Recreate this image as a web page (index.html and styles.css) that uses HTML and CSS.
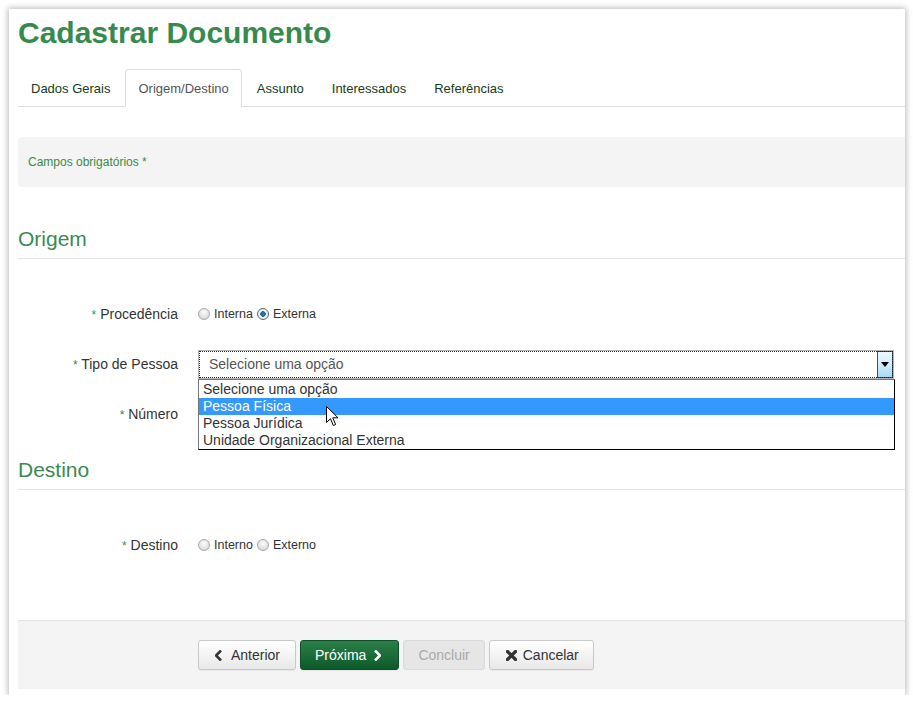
FILE: index.html
```html
<!DOCTYPE html>
<html lang="pt">
<head>
<meta charset="utf-8">
<title>Cadastrar Documento</title>
<link rel="stylesheet" href="styles.css">
</head>
<body>
<div class="panel">
  <h1 class="title">Cadastrar Documento</h1>
  <ul class="tabs">
    <li class="tab">Dados Gerais</li>
    <li class="tab active">Origem/Destino</li>
    <li class="tab">Assunto</li>
    <li class="tab">Interessados</li>
    <li class="tab">Referências</li>
  </ul>

  <div class="notice">Campos obrigatórios *</div>

  <h2 class="section">Origem</h2>

  <div class="row first">
    <div class="label"><span class="req">*</span> Procedência</div>
    <div class="control radios">
      <span class="radio"></span><span class="rtext">Interna</span>
      <span class="radio checked"></span><span class="rtext">Externa</span>
    </div>
  </div>

  <div class="row">
    <div class="label"><span class="req">*</span> Tipo de Pessoa</div>
    <div class="control selectwrap">
      <div class="select">
        <span class="select-text">Selecione uma opção</span>
        <span class="select-btn"><svg width="8" height="5" viewBox="0 0 8 5"><path d="M0 0H8L4 5Z" fill="#000"/></svg></span>
      </div>
      <ul class="dropdown">
        <li class="opt">Selecione uma opção</li>
        <li class="opt hl">Pessoa Física</li>
        <li class="opt">Pessoa Jurídica</li>
        <li class="opt">Unidade Organizacional Externa</li>
      </ul>
      <svg class="cursor" width="13" height="21" viewBox="0 0 13 21"><path d="M0.5 0.5V16.5L4.5 12.7L7.3 19.5L9.6 18.5L6.8 11.8H12Z" fill="#fff" stroke="#000" stroke-width="1" stroke-linejoin="round"/></svg>
    </div>
  </div>

  <div class="row">
    <div class="label"><span class="req">*</span> Número</div>
    <div class="control"></div>
  </div>

  <h2 class="section second">Destino</h2>

  <div class="row first">
    <div class="label"><span class="req">*</span> Destino</div>
    <div class="control radios">
      <span class="radio"></span><span class="rtext">Interno</span>
      <span class="radio"></span><span class="rtext">Externo</span>
    </div>
  </div>

  <div class="footer">
    <button class="btn"><svg class="ico" width="8" height="11" viewBox="0 0 8 11"><path d="M6 0.5L1 5.5L6 10.5" fill="none" stroke="#333" stroke-width="2.6"/></svg>Anterior</button>
    <button class="btn primary">Próxima<svg class="ico right" width="8" height="11" viewBox="0 0 8 11"><path d="M2 0.5L7 5.5L2 10.5" fill="none" stroke="#fff" stroke-width="2.6"/></svg></button>
    <button class="btn disabled">Concluir</button>
    <button class="btn cancel"><svg class="ico" width="11" height="11" viewBox="0 0 11 11"><path d="M1.5 1.5L9.5 9.5M9.5 1.5L1.5 9.5" stroke="#333" stroke-width="3.2" stroke-linecap="round"/></svg>Cancelar</button>
  </div>
</div>
</body>
</html>
```

FILE: styles.css
```css
* { box-sizing: border-box; }

html, body {
  margin: 0;
  padding: 0;
  background: #fff;
}

body {
  font-family: "Liberation Sans", Arial, sans-serif;
  color: #333;
  padding: 9px 0 0 9px;
}

.panel {
  width: 896px;
  background: #fff;
  padding: 7px 0 6px 9px;
  box-shadow: 0 0 6px 1px rgba(0, 0, 0, 0.28);
}

.title {
  margin: 0;
  font-size: 30px;
  line-height: 33px;
  font-weight: bold;
  color: #378a4e;
}

.tabs {
  list-style: none;
  margin: 20px 0 0 0;
  padding: 0;
  display: flex;
  border-bottom: 1px solid #ddd;
}

.tab {
  font-size: 13px;
  line-height: 18px;
  padding: 10px 12px 8px 12px;
  border: 1px solid transparent;
  border-radius: 4px 4px 0 0;
  margin-right: 2px;
  margin-bottom: -1px;
  color: #183a20;
}

.tab.active {
  border-color: #ddd #ddd transparent #ddd;
  background: #fff;
  color: #555;
}

.notice {
  margin-top: 30px;
  height: 50px;
  background: #f4f4f4;
  border-radius: 3px 0 0 3px;
  padding: 16px 10px;
  font-size: 12px;
  line-height: 18px;
  color: #3c8a45;
}

.section {
  margin: 40px 0 0 0;
  font-size: 21px;
  line-height: 24px;
  font-weight: normal;
  color: #3a8a54;
  padding-bottom: 7px;
  border-bottom: 1px solid #e5e5e5;
}

.section.second {
  margin-top: 29px;
}

.row {
  display: flex;
  align-items: center;
  height: 30px;
  margin-top: 20px;
}

.row.first {
  margin-top: 40px;
}

.label {
  width: 160px;
  text-align: right;
  font-size: 14px;
  color: #333;
  flex: none;
}

.req {
  color: #3c8a45;
  font-size: 12px;
}

.control {
  margin-left: 20px;
  flex: 1;
}

.radios {
  display: flex;
  align-items: center;
  font-size: 12.5px;
  color: #333;
}

.radio {
  width: 12px;
  height: 12px;
  border-radius: 50%;
  border: 1px solid #a8a8a8;
  background: radial-gradient(circle at 50% 35%, #fbfbfb 0%, #e2e2e2 60%, #cfcfcf 100%);
  margin-right: 4px;
  position: relative;
}

.radio.checked {
  border-color: #5a6b7a;
  background: radial-gradient(circle at 50% 50%, #2a7fc4 0, #1d5f96 2.5px, #f2f2f2 3px, #e0e0e0 100%);
}

.rtext {
  margin-right: 4px;
}

.selectwrap {
  position: relative;
  margin-right: 11px;
}

.select {
  height: 29px;
  border: 1px solid #b5b5b5;
  outline: 1px dotted #222;
  outline-offset: -2px;
  background: #fff;
  display: flex;
  align-items: center;
  justify-content: space-between;
  padding-left: 10px;
}

.select-text {
  font-size: 14px;
  color: #555;
}

.select-btn {
  width: 16px;
  height: 27px;
  border: 1px solid #3c5468;
  background: linear-gradient(#eef8fe, #d3ecfb 50%, #a9daf5);
  display: flex;
  align-items: center;
  justify-content: center;
}

.dropdown {
  position: absolute;
  left: 0;
  top: 29px;
  width: 697px;
  margin: 0;
  padding: 1px 0 0 0;
  list-style: none;
  background: #fff;
  border: 1px solid #767676;
  border-right-color: #000;
  border-bottom-color: #000;
  z-index: 2;
}

.opt {
  height: 17px;
  line-height: 17px;
  font-size: 14px;
  padding-left: 4px;
  color: #333;
}

.opt.hl {
  background: #3399ff;
  color: #fff;
}

.cursor {
  position: absolute;
  left: 128px;
  top: 56px;
  z-index: 3;
}

.footer {
  margin-top: 60px;
  border-top: 1px solid #e3e3e3;
  background: #f4f4f4;
  padding: 19px 0 19px 180px;
  display: flex;
  gap: 4px;
}

.btn {
  font-family: "Liberation Sans", Arial, sans-serif;
  font-size: 14px;
  height: 30px;
  padding: 0 15px 0 16px;
  border: 1px solid #c8c8c8;
  border-radius: 3px;
  background: linear-gradient(#ffffff, #e8e8e8);
  color: #333;
  display: flex;
  align-items: center;
  box-shadow: 0 1px 1px rgba(0, 0, 0, 0.06);
}

.btn .ico {
  margin-right: 8px;
}

.btn .ico.right {
  margin-right: 0;
  margin-left: 7px;
}

.btn.primary {
  background: linear-gradient(#2b7f47, #0d5a2b);
  border-color: #0f4f27;
  color: #fff;
  padding: 0 17px 0 14px;
}

.btn.disabled {
  background: #e6e6e6;
  border-color: #dadada;
  color: #a9a9a9;
  box-shadow: none;
  padding: 0 14px;
}

.btn.cancel {
  padding: 0 14px 0 16px;
}

.btn.cancel .ico {
  margin-right: 6px;
}
```
